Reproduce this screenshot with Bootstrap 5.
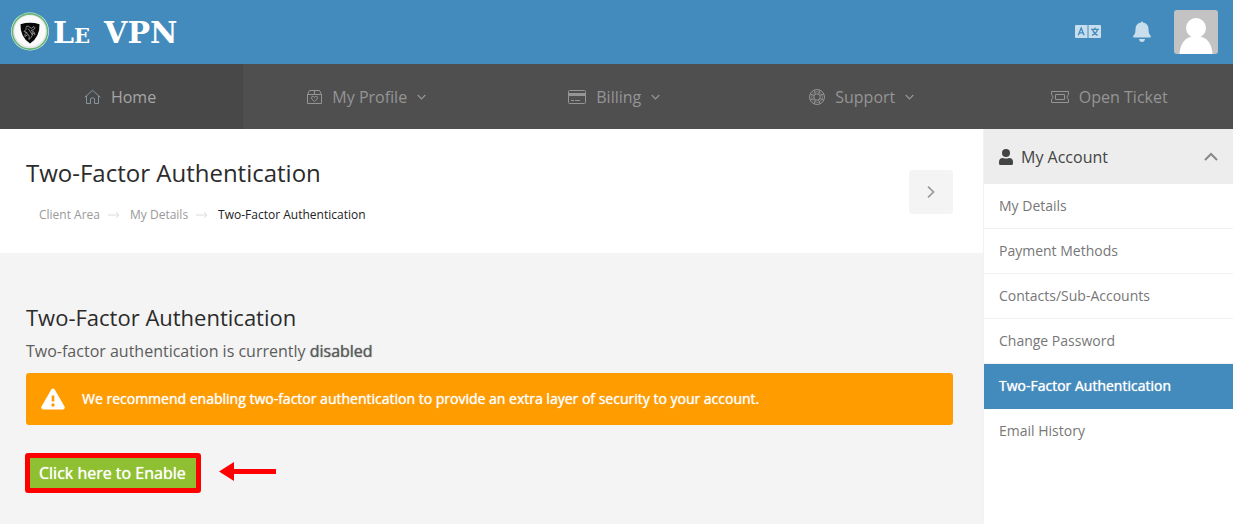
<!DOCTYPE html>
<html lang="en">
<head>
<meta charset="utf-8">
<meta name="viewport" content="width=device-width, initial-scale=1">
<title>Two-Factor Authentication - Le VPN</title>
<link href="https://cdn.jsdelivr.net/npm/bootstrap@5.3.0/dist/css/bootstrap.min.css" rel="stylesheet">
<style>
  body { font-family: "Open Sans", sans-serif; color: #5c5c5c; background: #f4f4f4; }
  a { text-decoration: none; }
  svg { display: block; flex: none; }
  .topbar { background: #428bbc; height: 64px; padding: 0 15px 0 10px; }
  .brand { color: #fff; font: bold 30px/40px "DejaVu Serif", serif; gap: 3px; }
  .brand-text { font-variant: small-caps; gap: 14px; padding-top: 2px; }
  .icon-btn { color: #c8deec; }
  .avatar { border-radius: 3px; overflow: hidden; margin-left: 23px; }
  .mainnav { background: #4f4f4f; }
  .mainnav .nav-item { flex: 55 1 0; }
  .mainnav .home { flex: 54 1 0; background: #484848; }
  .mainnav a { height: 65px; color: #959595; font-size: 16px; gap: 10px; }
  .mainnav .home a { color: #a6a6a6; padding-right: 3px; }
  .mainnav .home svg { color: #8496a0; }
  .page-body { flex: 1; min-height: 395px; }
  .page-head { background: #fff; padding: 26px 30px 24px 26px; }
  .head-text { padding-bottom: 5px; }
  .page-title { font-size: 24px; line-height: 36px; color: #2b2b2b; }
  .crumbs { font-size: 12px; line-height: 18px; margin-top: 15px; padding-left: 13px; gap: 6px; }
  .crumbs li { gap: 6px; }
  .crumbs a { color: #999; }
  .crumbs .current { color: #222; }
  .crumbs svg { color: #dcdcdc; }
  .btn-next { width: 44px; height: 44px; background: #f4f4f4; color: #999; border-radius: 3px; }
  .content { padding: 47px 30px 30px 26px; }
  .section-title { font-size: 22px; line-height: 34px; color: #2b2b2b; }
  .status { font-size: 16px; line-height: 24px; margin: 5px 0 10px; }
  .soft-bold { font-weight: 400; text-shadow: 0 0 1px currentColor; }
  .notice { background: #ff9c00; color: #fff; border-radius: 3px; font-size: 14px; line-height: 20px; padding: 15px; gap: 17px; margin-bottom: 28px; }
  .enable-row { gap: 18px; margin-left: -1px; }
  .btn-enable { background: #8fc031; color: #fff; border: 5px solid #f00; border-radius: 3px; font-size: 16px; line-height: 30px; padding: 0 10px 0 9px; }
  .sidebar { width: 250px; background: #fff; border-left: 1px solid #f2f2f2; flex: none; }
  .side-head { background: #ededed; color: #444; height: 55px; padding: 0 15px; font-size: 16px; gap: 8px; border: 0; }
  .side-list a { display: block; font-size: 14px; line-height: 20px; padding: 12px 15px; color: #777; border-bottom: 1px solid #f2f2f2; }
  .side-list li:last-child a { border: 0; }
  .side-list .current { background: #428bbc; color: #fff; border-color: #428bbc; }
</style>
</head>
<body class="d-flex flex-column min-vh-100">
<header>
  <div class="topbar d-flex align-items-center justify-content-between">
    <a href="#" class="brand d-flex align-items-center">
      <svg width="40" height="40" viewBox="0 0 40 40">
        <circle cx="20" cy="19.500" r="19" fill="#e3ece7"/>
        <circle cx="20" cy="19.500" r="17.600" fill="#e6e6e6" stroke="#63b878" stroke-width="1.600"/>
        <circle cx="20" cy="19" r="15.500" fill="#fafafa"/>
        <path d="M10.500 12.200Q20 9.500 29.500 12.200Q30 25 20 31.500Q10 25 10.500 12.200Z" fill="#080808"/>
        <path d="M16 14.500q3-1 4 1t4-1q2 1 0 3l-3 1q4 1 4 4l-3-2q1 3-1 5l-2 2q1-4-1-5l-3 2q-1-2 2-4l-3-1q3-2 2-4M15 19.500l3 3M18 16.500l5 7" fill="none" stroke="#a5a5a5" stroke-width=".8"/>
      </svg>
      <span class="brand-text d-flex"><span>Le</span><span>VPN</span></span>
    </a>
    <div class="d-flex align-items-center">
      <button type="button" class="btn p-0 border-0 icon-btn me-4" aria-label="Language">
        <svg width="26" height="14" viewBox="0 0 26 14"><path fill="currentColor" d="M1 0h11.500v13H1a1 1 0 0 1-1-1V1a1 1 0 0 1 1-1zM13.500 0H25a1 1 0 0 1 1 1v11a1 1 0 0 1-1 1H13.500z"/><path d="M3.300 10.200L6.200 3l2.900 7.200M4.300 7.800h3.800M16 4.300h8M20 2.600v1.700M17 10.300q4.500-2 5.500-6M17.700 5q1.300 3.800 5 5.300" fill="none" stroke="#428bbc" stroke-width="1.300"/></svg>
      </button>
      <button type="button" class="btn p-0 border-0 icon-btn ms-2" aria-label="Notifications">
        <svg width="18" height="22" viewBox="0 0 18 22"><path fill="currentColor" d="M8 1.500a1 1 0 0 1 2 0q5.500 1 5.500 6.500 0 5 2 6.500Q18.500 16.500 17 16.500H1Q-.5 16.500.5 14.500 2.500 13 2.500 8q0-5.500 5.500-6.500zM6 18h6q-.5 3-3 3t-3-3z"/></svg>
      </button>
      <a href="#" class="avatar" aria-label="Account">
        <svg width="44" height="44" viewBox="0 0 44 44"><path fill="#c3c3c3" d="M0 0h44v44H0z"/><circle cx="22" cy="18" r="10" fill="#fff"/><path fill="#fff" d="M5.500 44C6 34 11 26 22 26s16 8 16.500 18z"/></svg>
      </a>
    </div>
  </div>
  <nav class="mainnav" aria-label="Main">
    <ul class="nav flex-nowrap">
      <li class="nav-item home"><a href="#" class="d-flex align-items-center justify-content-center">
        <svg width="17" height="16" viewBox="0 0 17 16" fill="none" stroke="currentColor"><path d="M.7 8.300L8.500 1.300l7.800 7M2.500 7v7.500h4V10q0-1 1-1h2q1 0 1 1v4.500h4V7"/></svg>Home</a></li>
      <li class="nav-item"><a href="#" class="d-flex align-items-center justify-content-center">
        <svg width="15" height="16" viewBox="0 0 15 16" fill="none" stroke="currentColor"><path d="M.5 5.500h14v9H.5zM.5 5.500l2-4h10l2 4M7.500 1.500v4M7.500 12.500Q4.500 10.500 4.500 8.800q0-1.500 1.300-1.500 1.200 0 1.700 1.200.5-1.200 1.700-1.200 1.300 0 1.300 1.500 0 1.700-3 3.700z"/></svg>My Profile
        <svg width="9" height="6" viewBox="0 0 9 6" fill="none" stroke="currentColor" stroke-width="1.200"><path d="M.7 1l3.800 3.800L8.300 1"/></svg></a></li>
      <li class="nav-item"><a href="#" class="d-flex align-items-center justify-content-center">
        <svg width="18" height="14" viewBox="0 0 18 14" fill="none" stroke="currentColor"><rect x=".5" y=".5" width="17" height="13" rx="1"/><path d="M1 4.500h16" stroke-width="3"/><path d="M3 10.500h3M7 10.500h5"/></svg>Billing
        <svg width="9" height="6" viewBox="0 0 9 6" fill="none" stroke="currentColor" stroke-width="1.200"><path d="M.7 1l3.800 3.800L8.300 1"/></svg></a></li>
      <li class="nav-item"><a href="#" class="d-flex align-items-center justify-content-center">
        <svg width="16" height="16" viewBox="0 0 16 16" fill="none" stroke="currentColor"><circle cx="8" cy="8" r="7.500"/><circle cx="8" cy="8" r="3.200"/><path d="M5.300 1.200l1 4M10.700 1.200l-1 4M5.300 14.800l1-4M10.700 14.800l-1-4M1.200 5.300l4 1M1.200 10.700l4-1M14.800 5.300l-4 1M14.800 10.700l-4-1" stroke-width=".9"/><circle cx="8" cy="8" r="5.400" stroke-width=".6"/></svg>Support
        <svg width="9" height="6" viewBox="0 0 9 6" fill="none" stroke="currentColor" stroke-width="1.200"><path d="M.7 1l3.800 3.800L8.300 1"/></svg></a></li>
      <li class="nav-item"><a href="#" class="d-flex align-items-center justify-content-center">
        <svg width="18" height="12" viewBox="0 0 18 12" fill="none" stroke="currentColor"><path d="M.5.500h17v3.300q-1.500.5-1.500 2.200t1.500 2.200v3.300H.5V8.200q1.500-.5 1.500-2.200T.5 3.800zM4.500 3.500h9v5h-9z"/></svg>Open Ticket</a></li>
    </ul>
  </nav>
</header>
<div class="page-body d-flex">
  <main class="flex-grow-1">
    <div class="page-head d-flex align-items-center justify-content-between">
      <div class="head-text">
        <h1 class="page-title mb-0 fw-normal">Two-Factor Authentication</h1>
        <nav aria-label="Breadcrumb">
          <ol class="crumbs list-unstyled d-flex mb-0">
            <li class="d-flex align-items-center"><a href="#">Client Area</a>
              <svg width="18" height="10" viewBox="0 0 18 10" fill="none" stroke="currentColor"><path d="M2 5h11M10 2l3 3-3 3"/></svg></li>
            <li class="d-flex align-items-center"><a href="#">My Details</a>
              <svg width="18" height="10" viewBox="0 0 18 10" fill="none" stroke="currentColor"><path d="M2 5h11M10 2l3 3-3 3"/></svg></li>
            <li class="current" aria-current="page">Two-Factor Authentication</li>
          </ol>
        </nav>
      </div>
      <button type="button" class="btn btn-next border-0 p-0 d-flex align-items-center justify-content-center" aria-label="Next">
        <svg width="8" height="12" viewBox="0 0 8 12" fill="none" stroke="currentColor" stroke-width="1.700"><path d="M1 .7L6.500 6 1 11.300"/></svg>
      </button>
    </div>
    <section class="content">
      <h2 class="section-title mb-0 fw-normal">Two-Factor Authentication</h2>
      <p class="status">Two-factor authentication is currently <strong class="soft-bold">disabled</strong></p>
      <div class="notice d-flex align-items-center" role="alert">
        <svg width="24" height="22" viewBox="0 0 24 22"><path fill="#fff" d="M10.300 1.500q1.700-2 3.400 0l9.800 17q1 2.500-1.500 3H2q-2.500-.5-1.500-3z"/><path stroke="#ff9c00" stroke-width="2.600" d="M12 7.500v6"/><circle cx="12" cy="17" r="1.700" fill="#ff9c00"/></svg>
        <span class="soft-bold">We recommend enabling two-factor authentication to provide an extra layer of security to your account.</span>
      </div>
      <div class="enable-row d-flex align-items-center">
        <button type="button" class="btn btn-enable soft-bold">Click here to Enable</button>
        <svg width="58" height="24" viewBox="0 0 58 24"><path fill="#f00" d="M0 10.500L15 1v7h42v5H15v7z"/></svg>
      </div>
    </section>
  </main>
  <aside class="sidebar">
    <button type="button" class="side-head w-100 d-flex align-items-center" aria-expanded="true">
      <svg width="14" height="16" viewBox="0 0 14 16" fill="currentColor"><circle cx="7" cy="4" r="4"/><path d="M0 13q0-4 4-4 3 1 6 0 4 0 4 4v1.500q0 1.500-1.500 1.500h-11Q0 16 0 14.500z"/></svg>
      My Account
      <svg class="ms-auto" width="14" height="9" viewBox="0 0 14 9" fill="none" stroke="#888" stroke-width="2"><path d="M1 8l6-6 6 6"/></svg>
    </button>
    <ul class="side-list list-unstyled mb-0">
      <li><a href="#">My Details</a></li>
      <li><a href="#">Payment Methods</a></li>
      <li><a href="#">Contacts/Sub-Accounts</a></li>
      <li><a href="#">Change Password</a></li>
      <li><a href="#" class="current soft-bold" aria-current="page">Two-Factor Authentication</a></li>
      <li><a href="#">Email History</a></li>
    </ul>
  </aside>
</div>
<script src="https://cdn.jsdelivr.net/npm/bootstrap@5.3.0/dist/js/bootstrap.bundle.min.js"></script>
</body>
</html>
